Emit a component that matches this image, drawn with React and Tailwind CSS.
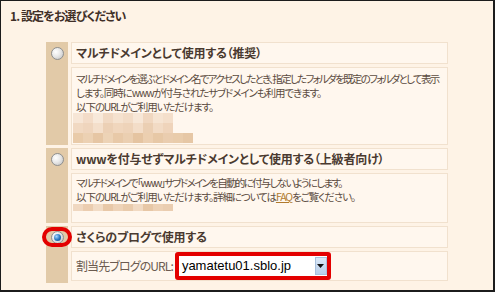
import React from "react";

const jp = "font-['Noto_Sans_CJK_JP',sans-serif] [font-feature-settings:'palt']";

const mosaic1 = [
  ["bg-[#f7e6d6]", "bg-[#f3dcc8]", "bg-[#f8e9da]", "bg-[#f1d9c3]", "bg-[#f5e2cf]", "bg-[#f2dcc7]", "bg-[#f7e7d7]", "bg-[#f0d7c0]", "bg-[#f6e4d2]", "bg-[#f4dfcb]"],
  ["bg-[#f1d9c2]", "bg-[#efd5bd]", "bg-[#f4dfcb]", "bg-[#ecd0b5]", "bg-[#f0d6bd]", "bg-[#eed3b9]", "bg-[#f3ddc8]", "bg-[#ebcfb3]", "bg-[#f2dbc5]", "bg-[#efd4bb]"],
  ["bg-[#e9cba9]", "bg-[#ecd1b3]", "bg-[#e6c6a4]", "bg-[#edd3b6]", "bg-[#e8c9a8]", "bg-[#ebcfb1]", "bg-[#e5c4a1]", "bg-[#eccfb0]", "bg-[#e7c8a6]", "bg-[#eacdaf]", "bg-[#e9ccab]", "bg-[#e6c7a5]"],
];

const mosaic2 = ["bg-[#f0d8c1]", "bg-[#ebcdb0]", "bg-[#f2dcc6]", "bg-[#e8c8a8]", "bg-[#eed3b8]", "bg-[#e9cbac]", "bg-[#f1dac3]", "bg-[#e7c7a6]", "bg-[#edd1b5]", "bg-[#eacdb0]"];

function Radio({ checked }) {
  return (
    <div className="w-[13px] h-[13px] rounded-full border border-[#8e8f8f] bg-[radial-gradient(circle_at_35%_35%,#ffffff_0%,#e8e8e8_45%,#bcbcbc_100%)] flex items-center justify-center">
      {checked && (
        <div className="w-[7px] h-[7px] rounded-full bg-[radial-gradient(circle_at_35%_35%,#a8d8ff_0%,#2f7cc4_50%,#0c3d76_100%)]" />
      )}
    </div>
  );
}

function Section({ checked, title, children, annotate }) {
  return (
    <div className="flex gap-[3px]">
      <div className="w-[22px] shrink-0 bg-[#E2CAA8] relative">
        <div className="h-[22px] flex items-center justify-center">
          <Radio checked={checked} />
        </div>
        {annotate && (
          <div className="absolute left-[-4px] top-[1px] w-[30px] h-[20px] rounded-full border-[4px] border-[#e30000]" />
        )}
      </div>
      <div className="flex-1 min-w-0 flex flex-col gap-[3px]">
        <div className={`h-[22px] border border-[#F1E1CE] bg-[#FFF7EE] flex items-center pl-[4px] text-[12px] font-bold text-[#4A3A30] whitespace-nowrap tracking-[-0.2px] ${jp}`}>
          {title}
        </div>
        {children}
      </div>
    </div>
  );
}

export default function App() {
  return (
    <div className="w-[495px] h-[292px] bg-[#FEF3E6] border-t border-l border-r-2 border-b-2 border-[#1c1c1c] overflow-hidden">
      <div className={`pl-[9px] pt-[7px] leading-[16px] text-[12px] font-bold text-[#3F2F27] tracking-[-0.9px] ${jp}`}>
        1. 設定をお選びください
      </div>

      <div className="ml-[45px] mr-[45px] mt-[18px] flex flex-col gap-[3px]">
        <Section title="マルチドメインとして使用する（推奨）">
          <div className={`h-[78px] border border-[#F1E1CE] bg-[#FFF7EE] pl-[4px] pt-[4px] text-[10.5px] leading-[14px] tracking-[-1.1px] text-[#5B4B40] whitespace-nowrap overflow-hidden ${jp}`}>
            <span className="tracking-[-1.7px]">
              マルチドメインを選ぶとドメイン名でアクセスしたとき、指定したフォルダを既定のフォルダとして表示
            </span>
            <br />
            します。同時にwwwが付与されたサブドメインも利用できます。
            <br />
            以下のURLがご利用いただけます。
            <div className="ml-[-3px] mt-[-1px] flex flex-col">
              {mosaic1.map((row, i) => (
                <div key={i} className="flex">
                  {row.map((c, j) => (
                    <div key={j} className={`w-[10px] h-[10px] ${c}`} />
                  ))}
                </div>
              ))}
            </div>
          </div>
        </Section>

        <Section title="wwwを付与せずマルチドメインとして使用する（上級者向け）">
          <div className={`h-[50px] border border-[#F1E1CE] bg-[#FFF7EE] pl-[4px] pt-[2px] text-[10.5px] leading-[14px] tracking-[-1.1px] text-[#5B4B40] whitespace-nowrap overflow-hidden ${jp}`}>
            <span className="tracking-[-1.7px]">
              マルチドメインで「www」サブドメインを自動的に付与しないようにします。
            </span>
            <br />
            以下のURLがご利用いただけます。詳細については
            <span className="text-[#B07A2E] underline">FAQ</span>
            をご覧ください。
            <div className="ml-[-3px] flex">
              {mosaic2.map((c, j) => (
                <div key={j} className={`w-[10px] h-[7px] ${c}`} />
              ))}
            </div>
          </div>
        </Section>

        <Section checked annotate title="さくらのブログで使用する">
          <div className="pb-[2px]">
            <div className="h-[30px] border border-[#F1E1CE] bg-[#FFF7EE] pl-[4px] flex items-center gap-[2px]">
              <span className={`text-[12px] text-[#6B5B50] whitespace-nowrap tracking-[-0.9px] ${jp}`}>割当先ブログのURL:</span>
              <div className="w-[156px] h-[28px] rounded-[3px] border-[4px] border-[#e30000] bg-white flex items-stretch">
                <div className="flex-1 flex items-center pl-[3px] text-[13px] text-black font-['Liberation_Sans',Arial,sans-serif]">
                  yamatetu01.sblo.jp
                </div>
                <div className="w-[12px] my-[1px] border border-[#a9c1dd] bg-[linear-gradient(#dbe8f7,#b9cfea)] flex items-center justify-center">
                  <svg width="7" height="4" viewBox="0 0 7 4">
                    <path d="M0 0H7L3.5 4Z" fill="#111" />
                  </svg>
                </div>
              </div>
            </div>
          </div>
        </Section>
      </div>
    </div>
  );
}
